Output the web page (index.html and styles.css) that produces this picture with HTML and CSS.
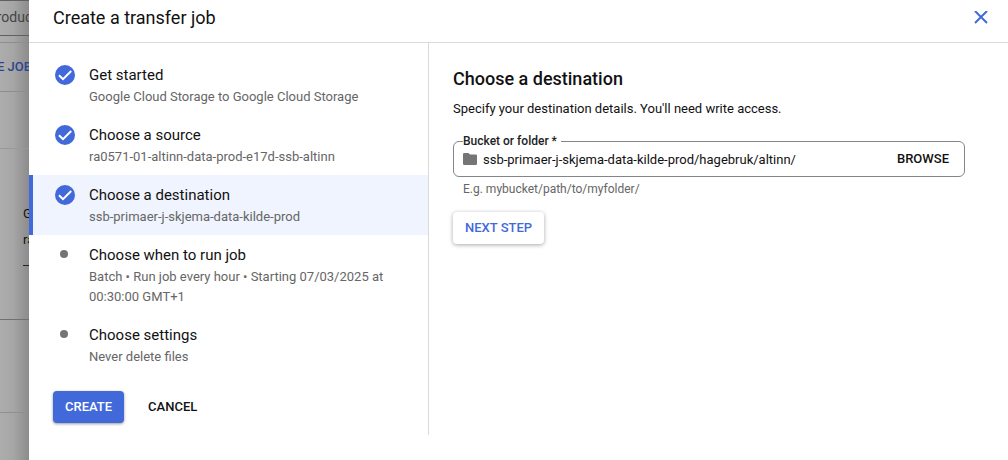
FILE: index.html
```html
<!DOCTYPE html>
<html lang="en">
<head>
<meta charset="utf-8">
<title>Create a transfer job</title>
<link rel="stylesheet" href="styles.css">
</head>
<body>
<div class="app">
  <div class="backdrop" aria-hidden="true">
    <div class="bg-search">roduc</div>
    <div class="bg-toolbar">E JOB</div>
    <div class="bg-gap"></div>
    <div class="bg-details"><span>G</span><span>ra</span><span class="bg-dash"></span></div>
    <div class="bg-card"></div>
  </div>
  <main class="panel">
    <header class="panel-header">
      <h1 class="panel-title">Create a transfer job</h1>
      <button class="close" type="button" aria-label="Close">
        <svg width="14" height="14" viewBox="0 0 14 14"><path d="M1 0 13 12M13 0 1 12" fill="none" stroke="currentColor" stroke-width="2"/></svg>
      </button>
    </header>
    <div class="panel-body">
      <nav class="sidebar">
        <ol class="steps">
          <li class="step">
            <svg class="check" width="20" height="20" viewBox="0 0 20 20"><circle cx="10" cy="10" r="10" fill="#4169d9"/><path d="M4 10.200 8 14.200 16.200 6" fill="none" stroke="#fff" stroke-width="2"/></svg>
            <div class="step-text"><h2 class="step-title">Get started</h2><p class="step-note">Google Cloud Storage to Google Cloud Storage</p></div>
          </li>
          <li class="step">
            <svg class="check" width="20" height="20" viewBox="0 0 20 20"><circle cx="10" cy="10" r="10" fill="#4169d9"/><path d="M4 10.200 8 14.200 16.200 6" fill="none" stroke="#fff" stroke-width="2"/></svg>
            <div class="step-text"><h2 class="step-title">Choose a source</h2><p class="step-note">ra0571-01-altinn-data-prod-e17d-ssb-altinn</p></div>
          </li>
          <li class="step step-active" aria-current="step">
            <svg class="check" width="20" height="20" viewBox="0 0 20 20"><circle cx="10" cy="10" r="10" fill="#4169d9"/><path d="M4 10.200 8 14.200 16.200 6" fill="none" stroke="#fff" stroke-width="2"/></svg>
            <div class="step-text"><h2 class="step-title">Choose a destination</h2><p class="step-note">ssb-primaer-j-skjema-data-kilde-prod</p></div>
          </li>
          <li class="step">
            <span class="dot"></span>
            <div class="step-text"><h2 class="step-title">Choose when to run job</h2><p class="step-note">Batch • Run job every hour • Starting 07/03/2025 at 00:30:00 GMT+1</p></div>
          </li>
          <li class="step">
            <span class="dot"></span>
            <div class="step-text"><h2 class="step-title">Choose settings</h2><p class="step-note">Never delete files</p></div>
          </li>
        </ol>
        <div class="actions">
          <button class="btn btn-primary" type="button">CREATE</button>
          <button class="btn" type="button">CANCEL</button>
        </div>
      </nav>
      <section class="content">
        <h2 class="content-title">Choose a destination</h2>
        <p class="content-note">Specify your destination details. You'll need write access.</p>
        <fieldset class="field">
          <legend class="field-legend"><label for="bucket">Bucket or folder *</label></legend>
          <div class="field-row">
            <svg width="14" height="12" viewBox="0 0 14 12"><path d="M1.300 0H5.500L7 1.500H12.700Q14 1.500 14 2.800V10.700Q14 12 12.700 12H1.300Q0 12 0 10.700V1.300Q0 0 1.300 0Z" fill="#757575"/></svg>
            <input class="field-input" id="bucket" type="text" value="ssb-primaer-j-skjema-data-kilde-prod/hagebruk/altinn/">
            <button class="browse" type="button">BROWSE</button>
          </div>
        </fieldset>
        <p class="hint">E.g. mybucket/path/to/myfolder/</p>
        <button class="btn btn-raised" type="button">NEXT STEP</button>
      </section>
    </div>
  </main>
</div>
</body>
</html>
```
FILE: styles.css
```css
* { box-sizing: border-box; }
body { margin: 0; font-family: Roboto, sans-serif; font-size: 13px; line-height: 20px; color: #111; }
h1, h2, p, ol { margin: 0; padding: 0; font-weight: 400; }
button, input { font: inherit; color: inherit; border: 0; padding: 0; background: none; }
button { cursor: pointer; font-weight: 500; }
.app { display: flex; min-height: 100vh; overflow: hidden; }

.backdrop { flex: 0 0 29px; overflow: hidden; white-space: nowrap; background: linear-gradient(to right, #adadad, #a6a6a6 45%, #8c8c8c); }
.bg-search { display: flex; justify-content: center; height: 36px; padding-top: 6px; border-top: 1px solid #606060; border-bottom: 1px solid #606060; font-size: 14px; color: #444; }
.bg-toolbar { display: flex; justify-content: center; align-items: center; height: 50px; margin-top: 6px; border-top: 1px solid #8e8e8e; border-bottom: 1px solid #8e8e8e; font-weight: 500; color: #2c458f; }
.bg-gap { height: 57px; border-bottom: 1px solid #999; }
.bg-details { display: flex; flex-direction: column; gap: 6px; height: 171px; padding: 55px 0 0 23px; border-bottom: 1px solid #707070; }
.bg-dash { height: 1px; margin-top: 9px; background: #222; }
.bg-card { height: 93px; border-bottom: 1px solid #909090; }

.panel { flex: 1; min-width: 0; background: #fff; }
.panel-header { display: flex; align-items: center; justify-content: space-between; padding: 6px 20px 12px 24px; border-bottom: 1px solid #dadada; }
.panel-title { font-size: 18px; line-height: 24px; }
.close { display: flex; color: #4169d9; }
.panel-body { display: flex; }

.sidebar { flex: 0 0 400px; padding: 12px 0; border-right: 1px solid #dadada; }
.steps { list-style: none; }
.step { display: flex; gap: 14px; padding: 10px 24px 8px 26px; }
.step-active { background: linear-gradient(#4169d9, #4169d9) left / 4px 100% no-repeat #f0f4fe; }
.check, .dot { flex: none; }
.dot { width: 8px; height: 8px; margin: 5px 7px 0 5px; border-radius: 50%; background: #757575; }
.step-title { font-size: 15px; margin-bottom: 2px; }
.step-note { color: #666; }
.actions { display: flex; gap: 12px; padding: 16px 24px 0; }
.btn { height: 32px; padding: 0 12px; border-radius: 4px; }
.btn-primary { color: #fff; background: #4169d9; box-shadow: 0 1px 3px rgba(0, 0, 0, .4); }
.btn-raised { color: #4169d9; background: #fff; box-shadow: 0 1px 4px rgba(0, 0, 0, .35); }

.content { flex: 1; min-width: 0; padding: 24px 43px 24px 24px; }
.content-title { font-size: 18px; line-height: 24px; font-weight: 500; }
.content-note { margin: 8px 0 15px; }
.field { min-width: 0; margin: 0; padding: 0 15px 6px 9px; border: 1px solid #80868b; border-radius: 6px; }
.field-legend { height: 14px; padding: 0 4px 0 0; font-size: 12px; line-height: 14px; font-weight: 500; color: #222; }
.field-row { display: flex; align-items: center; gap: 6px; }
.field-input { flex: 1; min-width: 0; height: 22px; outline: 0; }
.hint { margin: 2px 0 13px; padding-left: 10px; color: #666; font-size: 12px; }
```
